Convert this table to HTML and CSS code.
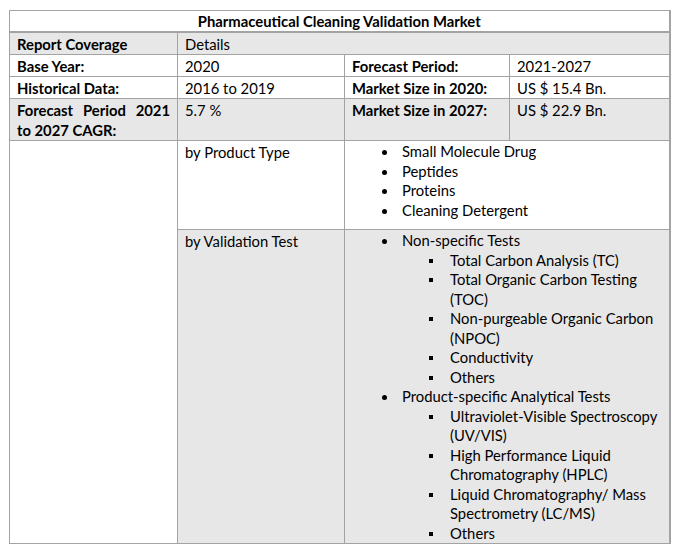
FILE: index.html
```html
<!DOCTYPE html>
<html>
<head>
<meta charset="utf-8">
<link rel="stylesheet" href="styles.css">
</head>
<body>
<table class="report">
  <colgroup>
    <col class="c1"><col class="c2"><col class="c3"><col class="c4">
  </colgroup>
  <tr class="title-row">
    <th colspan="4">Pharmaceutical Cleaning Validation Market</th>
  </tr>
  <tr class="shade">
    <td class="label">Report Coverage</td>
    <td colspan="3">Details</td>
  </tr>
  <tr>
    <td class="label">Base Year:</td>
    <td>2020</td>
    <td class="label">Forecast Period:</td>
    <td>2021-2027</td>
  </tr>
  <tr>
    <td class="label">Historical Data:</td>
    <td>2016 to 2019</td>
    <td class="label">Market Size in 2020:</td>
    <td>US $ 15.4 Bn.</td>
  </tr>
  <tr class="shade">
    <td class="label justify">Forecast Period 2021 to 2027 CAGR:</td>
    <td>5.7 %</td>
    <td class="label">Market Size in 2027:</td>
    <td>US $ 22.9 Bn.</td>
  </tr>
  <tr class="seg product">
    <td rowspan="2" class="blank"></td>
    <td>by Product Type</td>
    <td colspan="2">
      <ul class="lvl1">
        <li>Small Molecule Drug</li>
        <li>Peptides</li>
        <li>Proteins</li>
        <li>Cleaning Detergent</li>
      </ul>
    </td>
  </tr>
  <tr class="shade seg">
    <td>by Validation Test</td>
    <td colspan="2">
      <ul class="lvl1">
        <li>Non-specific Tests
          <ul class="lvl2">
            <li>Total Carbon Analysis (TC)</li>
            <li>Total Organic Carbon Testing (TOC)</li>
            <li>Non-purgeable Organic Carbon (NPOC)</li>
            <li>Conductivity</li>
            <li>Others</li>
          </ul>
        </li>
        <li>Product-specific Analytical Tests
          <ul class="lvl2">
            <li>Ultraviolet-Visible Spectroscopy (UV/VIS)</li>
            <li>High Performance Liquid Chromatography (HPLC)</li>
            <li>Liquid Chromatography/ Mass Spectrometry (LC/MS)</li>
            <li>Others</li>
          </ul>
        </li>
      </ul>
    </td>
  </tr>
</table>
</body>
</html>
```
FILE: styles.css
```css
html, body {
  margin: 0;
  padding: 0;
  background: #ffffff;
}
body {
  font-family: Lato, "Open Sans", sans-serif;
  font-size: 14.8px;
  color: #000000;
}
.report {
  border-collapse: collapse;
  margin: 10px 0 0 9px;
  table-layout: fixed;
  width: 660px;
}
.c1 { width: 168px; }
.c2 { width: 167px; }
.c3 { width: 165px; }
.c4 { width: 160px; }

.report th,
.report td {
  border: 1px solid #a3a3a3;
  padding: 1px 7px 0 7px;
  vertical-align: top;
  line-height: 20px;
  text-align: left;
}
.report tr > *:last-child {
  border-right: 2px solid #a3a3a3;
}
.title-row th {
  text-align: center;
  font-weight: 700;
  line-height: 20px;
  padding: 0 7px 0;
  border-bottom: 2px solid #a3a3a3;
}
.shade td {
  background: #e7e7e7;
}
.report tr > td.blank {
  background: #ffffff;
  border-right: 1px solid #a3a3a3;
}
.label {
  font-weight: 700;
}
.report td.justify {
  text-align: justify;
}
.seg td {
  padding-top: 1px;
  padding-bottom: 0;
}
.product td {
  height: 87px;
}
ul {
  margin: 0;
  padding: 0;
  list-style: none;
}
.seg ul li {
  line-height: 19.5px;
  position: relative;
}
.lvl1 {
  padding-left: 50px;
}
.lvl2 {
  padding-left: 48px;
}
.lvl1 > li::before {
  content: "";
  position: absolute;
  left: -20px;
  top: 8px;
  width: 5px;
  height: 5px;
  border-radius: 50%;
  background: #000000;
}
.lvl2 > li::before {
  content: "";
  position: absolute;
  left: -21px;
  top: 8px;
  width: 4px;
  height: 4px;
  border-radius: 0;
  background: #000000;
}
```
